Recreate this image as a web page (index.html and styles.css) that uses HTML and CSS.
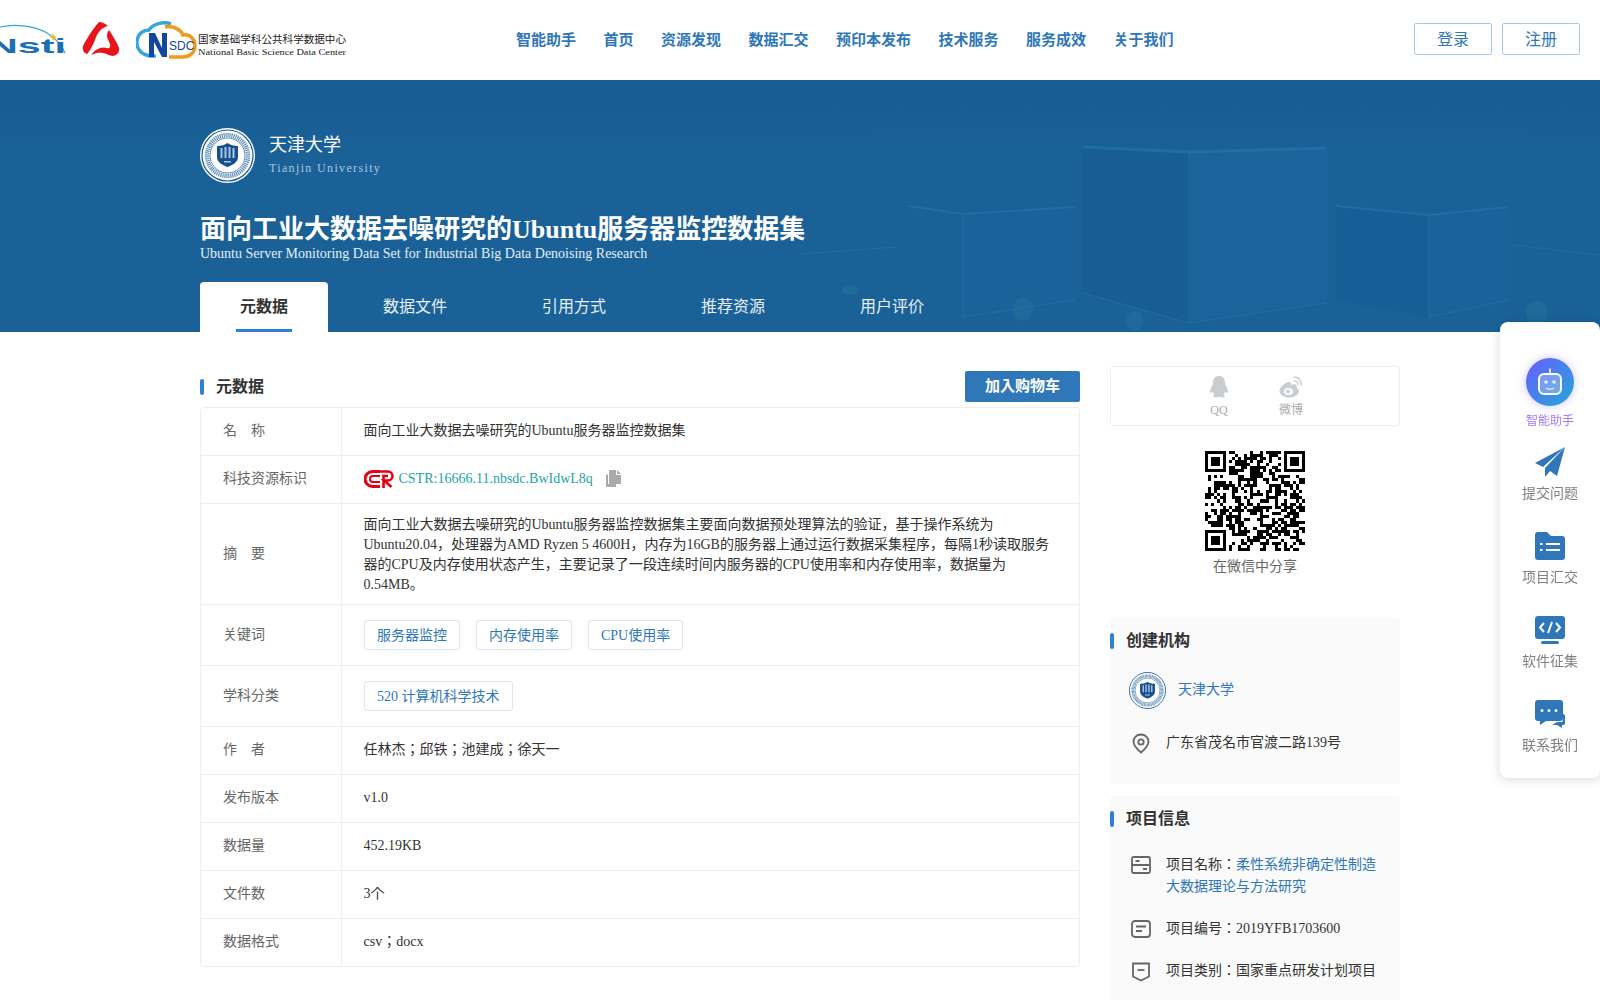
FILE: index.html
```html
<!DOCTYPE html>
<html lang="en">
<head>
  <meta charset="UTF-8" />
  <meta name="viewport" content="width=device-width, initial-scale=1.0" />
  <title>面向工业大数据去噪研究的Ubuntu服务器监控数据集</title>
  <link rel="stylesheet" href="styles.css">
</head>
<body>

  <header class="topbar">
    <div class="logos">
      <svg class="logo-nsti" width="76" height="40" viewBox="0 0 76 40">
        <path d="M0 8C14 5 33 6 47 14C55 19 62 26 65 34" fill="none" stroke="#35a5dc" stroke-width="1.200"/>
        <path d="M53 14l1.200 2.800 2.800 1.200-2.800 1.200-1.200 2.800-1.200-2.800-2.800-1.200 2.800-1.200z" fill="#f0c020"/>
        <text x="-12" y="34" class="nsti-text" textLength="78" lengthAdjust="spacingAndGlyphs">Nsti</text>
      </svg>
      <svg class="logo-red" width="38" height="36" viewBox="0 0 38 36">
        <path d="M17 0C20 0 24 2 26 4C20 5 15 11 13 18C10 25 8 29 5 32C2 31 0 28 1 24C4 18 10 8 17 0z" fill="#e8141c"/>
        <path d="M27 8C30 13 35 20 37 26C38 31 34 34 30 34C25 33 20 28 9 33C13 27 20 24 25 26C27 27 29 25 28 22C26 17 23 14 27 8z" fill="#e8141c"/>
      </svg>
      <svg class="logo-nsdc" width="216" height="38" viewBox="0 0 216 38">
        <path d="M20 35C6 36 0 28 1 20C2 12 8 9 13 9C17 3 27 0 35 3" fill="none" stroke="#36a7de" stroke-width="3.500"/>
        <path d="M29 6C37 4 45 9 47 14C54 13 59 18 59 25C59 32 53 36 47 36L33 36" fill="none" stroke="#f19a1c" stroke-width="3.500"/>
        <path d="M13 36V12H19L26 27V12H31V36H26L18 21V36z" fill="#12479c"/>
        <text x="33" y="29" class="nsdc-mark">SDC</text>
        <text x="62" y="22" class="nsdc-cn" textLength="148" lengthAdjust="spacingAndGlyphs">国家基础学科公共科学数据中心</text>
        <text x="62" y="34" class="nsdc-en" textLength="148" lengthAdjust="spacingAndGlyphs">National Basic Science Data Center</text>
      </svg>
    </div>
    <nav class="mainnav">
      <a href="#">智能助手</a>
      <a href="#">首页</a>
      <a href="#">资源发现</a>
      <a href="#">数据汇交</a>
      <a href="#">预印本发布</a>
      <a href="#">技术服务</a>
      <a href="#">服务成效</a>
      <a href="#">关于我们</a>
    </nav>
    <div class="account">
      <a class="btn-line" href="#">登录</a>
      <a class="btn-line" href="#">注册</a>
    </div>
  </header>

  <section class="hero">
    <svg class="hero-bg" width="1600" height="252" viewBox="0 80 1600 252">
      <g fill="none" stroke="#2a74a8" stroke-opacity=".16">
        <path d="M835 80V130M900 80V130M965 80V130M1030 80V130M1095 80V130M1165 80V130M1235 80V130M1300 80V130M1365 80V130M1435 80V130M1500 80V130M1565 80V130"/>
        <path d="M870 134H1530"/>
      </g>
      <path d="M1189 152L1327 148V303L1189 323z" fill="#1c6ca3" fill-opacity=".3"/>
      <path d="M1083 147L1189 152V323L1083 293z" fill="#15588f" fill-opacity=".3"/>
      <path d="M963 214L1075 207V300L963 317z" fill="#1c6ca3" fill-opacity=".2"/>
      <path d="M1429 215L1508 207V300L1429 317z" fill="#1c6ca3" fill-opacity=".2"/>
      <path d="M1336 206L1429 215V317L1336 300z" fill="#15588f" fill-opacity=".25"/>
      <g fill="none" stroke="#2473a9" stroke-opacity=".7">
        <path d="M1083 147L1189 152L1327 148" stroke-width="3"/>
        <path d="M1189 152V323L1327 303M1083 293L1189 323"/>
        <path d="M908 206L963 214L1075 207" stroke-width="2"/>
        <path d="M963 214V317L1075 300"/>
        <path d="M1336 206L1429 215L1508 207" stroke-width="2"/>
        <path d="M1429 215V317L1508 300"/>
        <path d="M800 254L897 247M1514 245L1600 255"/>
      </g>
      <g fill="#27759f" fill-opacity=".4">
        <ellipse cx="1023" cy="309" rx="10" ry="12"/>
        <ellipse cx="1135" cy="321" rx="9" ry="10"/>
        <ellipse cx="1537" cy="313" rx="11" ry="12"/>
        <ellipse cx="850" cy="290" rx="8" ry="5"/>
      </g>
    </svg>
    <div class="hero-inner">
      <div class="org">
        <svg class="seal" width="55" height="55" viewBox="0 0 55 55">
          <use href="#seal-mark"/>
        </svg>
        <div class="org-text">
          <div class="org-name">天津大学</div>
          <div class="org-en">Tianjin University</div>
        </div>
      </div>
      <h1>面向工业大数据去噪研究的Ubuntu服务器监控数据集</h1>
      <p class="title-en">Ubuntu Server Monitoring Data Set for Industrial Big Data Denoising Research</p>
      <ul class="tabs">
        <li class="active">元数据</li>
        <li>数据文件</li>
        <li>引用方式</li>
        <li>推荐资源</li>
        <li>用户评价</li>
      </ul>
    </div>
  </section>

  <main class="content">
    <section class="meta">
      <div class="meta-head">
        <h2 class="mark-title">元数据</h2>
        <a class="btn-cart" href="#">加入购物车</a>
      </div>
      <div class="meta-table">
        <div class="row">
          <div class="label">名&emsp;称</div>
          <div class="value">面向工业大数据去噪研究的Ubuntu服务器监控数据集</div>
        </div>
        <div class="row">
          <div class="label">科技资源标识</div>
          <div class="value cstr">
            <svg width="30" height="18" viewBox="0 0 30 18">
              <path d="M16 1.500H8.500a7.500 7.500 0 0 0 0 15H16" fill="none" stroke="#e60012" stroke-width="3"/>
              <path d="M16 6H9a3 3 0 0 0 0 6h7" fill="none" stroke="#e60012" stroke-width="2"/>
              <path d="M16 1.500H24a4.500 4.500 0 0 1 0 9H20l7.500 6.500M19.500 18V6H24" fill="none" stroke="#e60012" stroke-width="2.600"/>
            </svg>
            <a href="#">CSTR:16666.11.nbsdc.BwIdwL8q</a>
            <svg class="copy" width="15" height="17" viewBox="0 0 15 17">
              <path d="M0 4.500h2V14h8v3H1a1 1 0 0 1-1-1z" fill="#aaa"/>
              <path d="M3 1a1 1 0 0 1 1-1h6v5h5v8a1 1 0 0 1-1 1H4a1 1 0 0 1-1-1zM11 0l4 4h-4z" fill="#aaa"/>
            </svg>
          </div>
        </div>
        <div class="row">
          <div class="label tall">摘&emsp;要</div>
          <div class="value abstract">面向工业大数据去噪研究的Ubuntu服务器监控数据集主要面向数据预处理算法的验证，基于操作系统为Ubuntu20.04，处理器为AMD Ryzen 5 4600H，内存为16GB的服务器上通过运行数据采集程序，每隔1秒读取服务器的CPU及内存使用状态产生，主要记录了一段连续时间内服务器的CPU使用率和内存使用率，数据量为0.54MB。</div>
        </div>
        <div class="row">
          <div class="label tall">关键词</div>
          <div class="value tags">
            <a class="tag" href="#">服务器监控</a>
            <a class="tag" href="#">内存使用率</a>
            <a class="tag" href="#">CPU使用率</a>
          </div>
        </div>
        <div class="row">
          <div class="label tall">学科分类</div>
          <div class="value tags">
            <a class="tag" href="#">520 计算机科学技术</a>
          </div>
        </div>
        <div class="row">
          <div class="label">作&emsp;者</div>
          <div class="value">任林杰；邱铁；池建成；徐天一</div>
        </div>
        <div class="row">
          <div class="label">发布版本</div>
          <div class="value">v1.0</div>
        </div>
        <div class="row">
          <div class="label">数据量</div>
          <div class="value">452.19KB</div>
        </div>
        <div class="row">
          <div class="label">文件数</div>
          <div class="value">3个</div>
        </div>
        <div class="row">
          <div class="label">数据格式</div>
          <div class="value">csv；docx</div>
        </div>
      </div>
    </section>

    <aside class="side">
      <div class="share">
        <a href="#">
          <svg width="20" height="22" viewBox="0 0 20 22">
            <path d="M10 0C5.500 0 4 3.500 4 7c0 1.500-.500 2.500-1.500 4C1 13 .500 16 1.500 17c.500.300 1.500-.500 2-1.500.500 1 1 2 2 2.700C4.500 19 4 20 4.500 20.700 5.500 21.800 8.500 21.500 10 20.500c1.500 1 4.500 1.300 5.500.200.500-.700 0-1.700-1-2.500 1-.700 1.500-1.700 2-2.700.500 1 1.500 1.800 2 1.500 1-1 .500-4-1-6C17 9.500 16 8.500 16 7c0-3.500-1.500-7-6-7z" fill="#c9cdd0"/>
          </svg>
          <span>QQ</span>
        </a>
        <a href="#">
          <svg width="24" height="22" viewBox="0 0 24 22">
            <path d="M10 6C5 7 .500 11 .500 15c0 4 5 6.500 9.500 6.500 6 0 10-3.500 10-6.500 0-2-2-3-2.500-3 .500-1.500.500-3-1-3.500-1.500-.500-3.500 0-4.500.500.500-2-.500-3.500-2-3z" fill="#c9cdd0"/>
            <ellipse cx="9.500" cy="15.500" rx="4.500" ry="3.500" fill="#fff"/>
            <circle cx="9" cy="15.500" r="2" fill="#c9cdd0"/>
            <path d="M15 1.500c4-1 8 3 7 7.500M15.500 5c2-.500 4 1.500 3.500 3.500" fill="none" stroke="#c9cdd0" stroke-width="1.500" stroke-linecap="round"/>
          </svg>
          <span>微博</span>
        </a>
      </div>
      <div class="wechat">
        <svg id="qr" class="qr" width="100" height="100" viewBox="0 0 33 33" shape-rendering="crispEdges"></svg>
        <p>在微信中分享</p>
      </div>

      <div class="card org-card">
        <h2 class="mark-title">创建机构</h2>
        <a class="card-org" href="#">
          <svg width="39" height="39" viewBox="0 0 55 55"><use href="#seal-mark"/></svg>
          <span>天津大学</span>
        </a>
        <div class="info">
          <svg width="20" height="21" viewBox="0 0 20 21">
            <path d="M10 1.500c-4.400 0-7.500 3.300-7.500 7.200 0 4.300 4 7.800 7.500 10.800 3.500-3 7.500-6.500 7.500-10.800 0-3.900-3.100-7.200-7.500-7.200z" fill="none" stroke="#666" stroke-width="1.800"/>
            <circle cx="10" cy="9" r="2.700" fill="none" stroke="#666" stroke-width="1.800"/>
          </svg>
          <span>广东省茂名市官渡二路139号</span>
        </div>
      </div>

      <div class="card project-card">
        <h2 class="mark-title">项目信息</h2>
        <div class="info">
          <svg width="20" height="18" viewBox="0 0 20 18">
            <rect x="1" y="1" width="18" height="16" rx="1.500" fill="none" stroke="#666" stroke-width="1.800"/>
            <path d="M1 9h18M4.500 5h4M12 13h4" fill="none" stroke="#666" stroke-width="1.800"/>
          </svg>
          <span>项目名称：<a href="#">柔性系统非确定性制造大数据理论与方法研究</a></span>
        </div>
        <div class="info">
          <svg width="20" height="18" viewBox="0 0 20 18">
            <rect x="1" y="1" width="18" height="16" rx="3" fill="none" stroke="#666" stroke-width="1.800"/>
            <path d="M5 6.500h10M5 11h6" fill="none" stroke="#666" stroke-width="1.800"/>
          </svg>
          <span>项目编号：2019YFB1703600</span>
        </div>
        <div class="info">
          <svg width="20" height="20" viewBox="0 0 20 20">
            <path d="M2 1.500h16v13l-8 4-8-4z" fill="none" stroke="#666" stroke-width="1.800"/>
            <path d="M6.500 8h7" fill="none" stroke="#666" stroke-width="1.800"/>
          </svg>
          <span>项目类别：国家重点研发计划项目</span>
        </div>
      </div>
    </aside>
  </main>

  <div class="float-panel">
    <a class="float-item robot" href="#">
      <span class="robot-ball">
        <svg width="26" height="28" viewBox="0 0 26 28">
          <path d="M13 1v5" stroke="#fff" stroke-width="1.500" stroke-linecap="round"/>
          <rect x="2" y="6" width="22" height="20" rx="5" fill="#ffffff" fill-opacity=".25" stroke="#fff" stroke-width="2"/>
          <circle cx="9" cy="14" r="1.800" fill="#fff" fill-opacity=".8"/>
          <circle cx="17" cy="14" r="1.800" fill="#fff" fill-opacity=".8"/>
          <path d="M9 20c2 1.500 6 1.500 8 0" fill="none" stroke="#fff" stroke-opacity=".8" stroke-width="1.300"/>
        </svg>
      </span>
      <span>智能助手</span>
    </a>
    <a class="float-item plane" href="#">
      <svg width="30" height="30" viewBox="0 0 30 30">
        <path d="M30 0L0 16l8 4z" fill="#2f77b9"/>
        <path d="M30 0L10 21l0 9 5-6 7 5z" fill="#2f77b9"/>
      </svg>
      <span>提交问题</span>
    </a>
    <a class="float-item" href="#">
      <svg width="30" height="28" viewBox="0 0 30 28">
        <path d="M0 3a3 3 0 0 1 3-3h9l4 4h11a3 3 0 0 1 3 3v18a3 3 0 0 1-3 3H3a3 3 0 0 1-3-3z" fill="#2f77b9"/>
        <path d="M11 12h14M11 18h14M5 12h2.500M5 18h2.500" stroke="#fff" stroke-width="2"/>
      </svg>
      <span>项目汇交</span>
    </a>
    <a class="float-item" href="#">
      <svg width="30" height="28" viewBox="0 0 30 28">
        <rect width="30" height="23" rx="3" fill="#2f77b9"/>
        <rect x="6" y="25" width="18" height="3" rx="1.500" fill="#2f77b9"/>
        <path d="M9 7l-4 4.500 4 4.500M21 7l4 4.500-4 4.500M17 6l-4 11" fill="none" stroke="#fff" stroke-width="2"/>
      </svg>
      <span>软件征集</span>
    </a>
    <a class="float-item" href="#">
      <svg width="30" height="28" viewBox="0 0 30 28">
        <path d="M3 0h22a3 3 0 0 1 3 3v15a3 3 0 0 1-3 3H11l-6 4v-4H3a3 3 0 0 1-3-3V3a3 3 0 0 1 3-3z" fill="#2f77b9"/>
        <path d="M28 14a2 2 0 0 1 2 2v7a2 2 0 0 1-2 2h-1v3l-5-3h-5l5-3h4a2 2 0 0 0 2-2z" fill="#2f77b9"/>
        <circle cx="7" cy="10.500" r="1.500" fill="#fff"/><circle cx="14" cy="10.500" r="1.500" fill="#fff"/><circle cx="21" cy="10.500" r="1.500" fill="#fff"/>
      </svg>
      <span>联系我们</span>
    </a>
  </div>

  <svg class="defs" width="0" height="0">
    <defs>
      <g id="seal-mark">
        <circle cx="27.500" cy="27.500" r="27.500" fill="#fff"/>
        <circle cx="27.500" cy="27.500" r="25.500" fill="none" stroke="#1a5a92" stroke-width="1.200"/>
        <circle cx="27.500" cy="27.500" r="20.500" fill="none" stroke="#5f8fb8" stroke-width="4.500" stroke-dasharray="1.200 .8"/>
        <circle cx="27.500" cy="27.500" r="17.500" fill="#fff" stroke="#1a5a92" stroke-width=".7"/>
        <path d="M17 18c4 0 8-1 10.500-3 2.500 2 6.500 3 10.500 3v11c0 5-5 8-10.500 10C22 37 17 34 17 29z" fill="#17508c"/>
        <path d="M20.500 20h2v10h-2zM24.500 19h2v11h-2zM28.500 19h2v11h-2zM32.500 20h2v10h-2zM24 33h7v1.500h-7z" fill="#a9c6df"/>
      </g>
    </defs>
  </svg>

  <script src="qr.js"></script>
</body>
</html>
```

FILE: styles.css
```css
* {
  box-sizing: border-box;
}

html, body {
  margin: 0;
  padding: 0;
}

body {
  font-family: "Liberation Serif", "Noto Sans CJK JP", serif;
  font-size: 14px;
  color: #333;
  background-color: #fff;
}

a {
  text-decoration: none;
  color: #2f77b9;
}

h1, h2, p, ul {
  margin: 0;
  padding: 0;
}

.defs {
  position: absolute;
}

/* topo */
.topbar {
  height: 80px;
  display: flex;
  align-items: center;
  background-color: #fff;
}

.logos {
  display: flex;
  align-items: center;
  width: 516px;
}

.logo-nsti {
  margin-right: 6px;
  margin-top: -2px;
}

.logo-red {
  margin-right: 16px;
}

.nsti-text {
  font-family: "Liberation Sans", sans-serif;
  font-weight: 700;
  font-size: 21px;
  fill: #1a6fb5;
}

.nsdc-mark {
  font-family: "Liberation Sans", sans-serif;
  font-size: 12px;
  fill: #12479c;
}

.nsdc-cn {
  font-family: "Noto Sans CJK JP", sans-serif;
  font-size: 10px;
  fill: #222;
}

.nsdc-en {
  font-family: "Liberation Serif", serif;
  font-size: 9px;
  fill: #222;
}

.mainnav {
  display: flex;
  gap: 27.500px;
  flex: 1;
}

.mainnav a {
  font-size: 15px;
  line-height: 22px;
  font-weight: 700;
  color: #2f77b9;
  white-space: nowrap;
}

.account {
  display: flex;
  gap: 10px;
  margin: -2px 20px 0 0;
}

.btn-line {
  width: 78px;
  height: 32px;
  line-height: 32px;
  text-align: center;
  font-size: 16px;
  border: 1px solid #a9c7e3;
  border-radius: 2px;
}

/* banner */
.hero {
  position: relative;
  height: 252px;
  overflow: hidden;
  background: linear-gradient(#175c92, #1a6198 30%, #1a6198);
}

.hero-bg {
  position: absolute;
  left: 0;
  top: 0;
}

.hero-inner {
  position: relative;
  padding: 48px 0 0 200px;
}

.org {
  display: flex;
  align-items: center;
  gap: 14px;
}

.org-text {
  margin-top: -2px;
}

.seal {
  display: block;
}

.org-name {
  font-size: 18px;
  line-height: 24px;
  color: #fff;
}

.org-en {
  margin-top: 3px;
  font-size: 12px;
  line-height: 16px;
  letter-spacing: 1.350px;
  color: #a9c6dd;
}

.hero h1 {
  margin-top: 31px;
  font-size: 26px;
  line-height: 32px;
  font-weight: 700;
  color: #fff;
}

.title-en {
  margin-top: -1px;
  font-size: 14px;
  line-height: 17px;
  color: #e6eff6;
}

.tabs {
  display: flex;
  list-style: none;
  margin-top: 20px;
}

.tabs li {
  position: relative;
  height: 50px;
  line-height: 50px;
  padding: 0 40px;
  margin-right: 15px;
  font-size: 16px;
  color: #e6eff6;
}

.tabs li.active {
  width: 128px;
  margin-right: 15px;
  text-align: center;
  padding: 0;
  font-weight: 700;
  color: #333;
  background-color: #fff;
  border-radius: 4px 4px 0 0;
}

.tabs li.active::after {
  content: "";
  position: absolute;
  left: 36px;
  bottom: 0;
  width: 56px;
  height: 3px;
  background-color: #2f7fd3;
}

/* conteudo */
.content {
  display: flex;
  gap: 30px;
  padding: 34px 0 0 200px;
}

.meta {
  width: 880px;
}

.meta-head {
  display: flex;
  align-items: center;
  justify-content: space-between;
  height: 41px;
  padding: 5px 0;
}

.mark-title {
  position: relative;
  padding-left: 16px;
  font-size: 16px;
  line-height: 22px;
  font-weight: 700;
  color: #333;
}

.mark-title::before {
  content: "";
  position: absolute;
  left: 0;
  top: 3px;
  width: 4px;
  height: 16px;
  border-radius: 2px;
  background-color: #2f7fd3;
}

.btn-cart {
  width: 115px;
  height: 31px;
  line-height: 31px;
  text-align: center;
  font-size: 15px;
  font-weight: 700;
  color: #fff;
  background-color: #2f77b9;
  border-radius: 2px;
}

.meta-table {
  border: 1px solid #eee;
  border-radius: 4px;
}

.row {
  display: flex;
  min-height: 48px;
  border-bottom: 1px solid #eee;
}

.row:last-child {
  border-bottom: 0;
  min-height: 47px;
}

.label {
  flex: 0 0 141px;
  display: flex;
  align-items: center;
  padding: 0 0 2px 22px;
  line-height: 20px;
  color: #666;
  border-right: 1px solid #eee;
}

.label.tall {
  padding-bottom: 0;
}

.value {
  flex: 1;
  display: flex;
  align-items: center;
  padding: 0 21.500px 2px;
  line-height: 20px;
}

.abstract {
  display: block;
  padding: 11px 22px 9px 21.500px;
}

.cstr a {
  margin-left: 5px;
  color: #1ca4a4;
}

.cstr .copy {
  margin-left: 13px;
}

.tags {
  gap: 16px;
  padding: 15px 22px;
}

.tag {
  height: 30px;
  line-height: 29px;
  padding: 0 12px;
  border: 1px solid #dbe6f1;
  border-radius: 3px;
}

/* lateral */
.side {
  width: 290px;
}

.share {
  display: flex;
  justify-content: center;
  gap: 48px;
  height: 60px;
  padding-top: 9px;
  border: 1px solid #eee;
  border-radius: 4px;
}

.share a {
  display: flex;
  flex-direction: column;
  align-items: center;
  width: 24px;
  font-size: 12px;
  line-height: 16px;
  color: #aaa;
  white-space: nowrap;
}

.share span {
  margin-top: 4px;
}

.wechat {
  margin-top: 25px;
  text-align: center;
  color: #666;
}

.qr {
  display: block;
  margin: 0 auto;
}

.wechat p {
  margin-top: 6px;
  line-height: 20px;
}

.card {
  background-color: #fafafa;
  border-radius: 4px;
}

.org-card {
  margin-top: 41px;
  height: 166px;
  padding-top: 12px;
}

.card-org {
  display: flex;
  align-items: center;
  gap: 11px;
  margin: 19px 0 0 18px;
}

.card-org span {
  line-height: 20px;
  margin-top: -2px;
}

.info {
  display: flex;
  gap: 15px;
  padding: 0 20px 0 21px;
  line-height: 22px;
}

.org-card .info {
  margin-top: 22px;
  align-items: center;
}

.project-card {
  margin-top: 12px;
  height: 260px;
  padding-top: 12px;
}

.project-card .info {
  margin-top: 20px;
}

.project-card .info:nth-child(2) {
  margin-top: 24px;
}

.project-card .info svg {
  flex: none;
  margin-top: 2px;
}

/* painel flutuante */
.float-panel {
  position: fixed;
  right: 0;
  top: 322px;
  width: 100px;
  height: 456px;
  padding-top: 36px;
  background-color: #fff;
  border-radius: 8px;
  box-shadow: 0 2px 12px rgba(0,0,0,0.15);
}

.float-item {
  display: flex;
  flex-direction: column;
  align-items: center;
  height: 84px;
  padding-top: 2px;
  line-height: 20px;
  color: #808080;
}

.float-item svg {
  display: block;
}

.float-item span:last-child {
  margin-top: 8px;
}

.plane svg {
  margin: -1px 0 -1px;
}

.robot {
  height: 88px;
  padding-top: 0;
  font-size: 12px;
  color: #a07cff;
}

.robot span:last-child {
  margin-top: 6px;
  line-height: 18px;
}

.robot-ball {
  display: flex;
  align-items: center;
  justify-content: center;
  width: 48px;
  height: 48px;
  border-radius: 50%;
  background: linear-gradient(135deg, #6a5cff, #25a8d8);
  box-shadow: 0 0 10px rgba(106,92,255,0.35);
}
```

FILE: qr.js
```js
// desenha um codigo QR de modulos
var tamanho = 33;
var semente = 20190;

function proximo() {
  semente = (semente * 1103515245 + 12345) & 0x7fffffff;
  return (semente >> 16) & 1;
}

function finder(x, y) {
  return "M" + x + " " + y + "h7v7h-7z" +
    "M" + (x + 1) + " " + (y + 1) + "v5h5v-5z" +
    "M" + (x + 2) + " " + (y + 2) + "h3v3h-3z";
}

function naFinder(x, y) {
  var limite = tamanho - 8;
  return (x < 8 && y < 8) || (x >= limite && y < 8) || (x < 8 && y >= limite);
}

var d = finder(0, 0) + finder(tamanho - 7, 0) + finder(0, tamanho - 7);

for (var y = 0; y < tamanho; y++) {
  for (var x = 0; x < tamanho; x++) {
    if (!naFinder(x, y) && proximo()) {
      d += "M" + x + " " + y + "h1v1h-1z";
    }
  }
}

var caminho = document.createElementNS("http://www.w3.org/2000/svg", "path");
caminho.setAttribute("d", d);
caminho.setAttribute("fill", "#000");
caminho.setAttribute("fill-rule", "evenodd");
document.getElementById("qr").appendChild(caminho);
```
